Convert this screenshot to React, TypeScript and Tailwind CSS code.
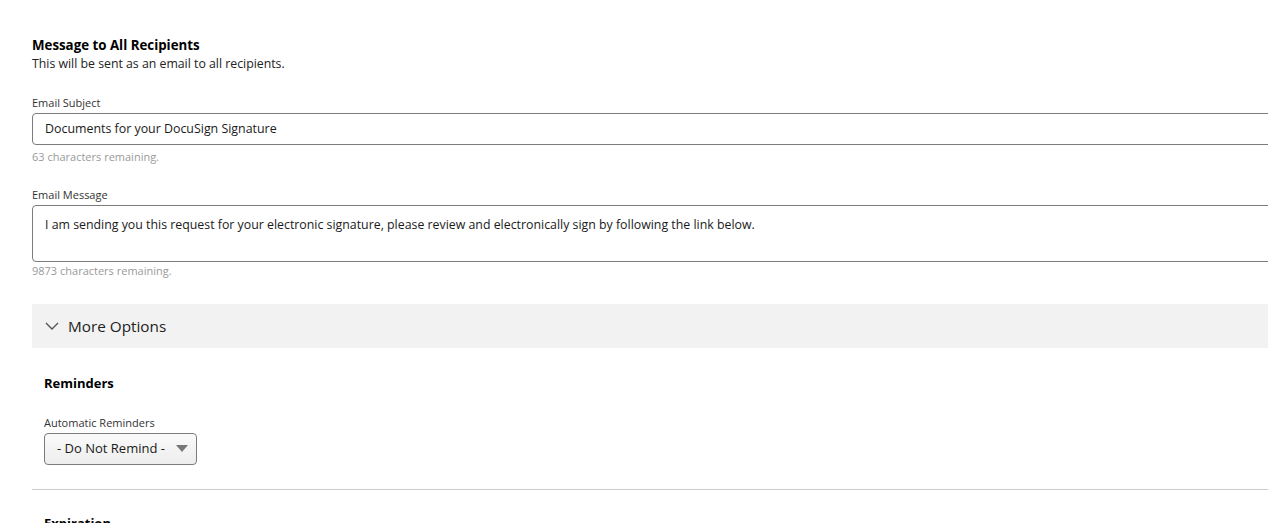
import React from "react";

export default function App() {
  const font = { fontFamily: '"Segoe UI", "Open Sans", "Noto Sans", sans-serif' };
  return (
    <div className="h-[523px] w-full overflow-hidden bg-white text-[#1a1a1a]" style={font}>
      <div className="w-[1300px] pl-8 pt-[36px]">
        <h2 className="text-[13.3px] font-bold leading-[18px] text-black">Message to All Recipients</h2>
        <p className="text-[12.3px] leading-[20px] text-[#222]">This will be sent as an email to all recipients.</p>

        <div className="mt-[22px]">
          <label className="block text-[11px] leading-[14px] text-[#333]">Email Subject</label>
          <div className="mt-[3px] flex h-[32px] w-[1260px] items-center rounded-[4px] border border-[#7c7c7c] px-3 text-[12.4px] text-[#1a1a1a]">
            Documents for your DocuSign Signature
          </div>
          <p className="mt-[5px] text-[11px] leading-[14px] text-[#9a9a9a]">63 characters remaining.</p>
        </div>

        <div className="mt-[24px]">
          <label className="block text-[11px] leading-[14px] text-[#333]">Email Message</label>
          <div className="mt-[3px] h-[57px] w-[1260px] rounded-[4px] border border-[#7c7c7c] px-3 pt-[10px] text-[12.35px] text-[#1a1a1a]">
            I am sending you this request for your electronic signature, please review and electronically sign by following the link below.
          </div>
          <p className="mt-[2px] text-[11px] leading-[14px] text-[#9a9a9a]">9873 characters remaining.</p>
        </div>

        <div className="mt-[26px] flex h-[44px] w-[1260px] items-center bg-[#f2f2f2] pl-[13px]">
          <svg width="14" height="14" viewBox="0 0 14 14" className="mr-[9px]">
            <path d="M1 4 L7 10 L13 4" fill="none" stroke="#555" strokeWidth="1.4" />
          </svg>
          <span className="text-[15.3px] text-[#222]">More Options</span>
        </div>

        <div className="pl-3">
          <h3 className="mt-[26px] text-[13px] font-bold leading-[18px] text-black">Reminders</h3>
          <label className="mt-[24px] block text-[11px] leading-[14px] text-[#333]">Automatic Reminders</label>
          <div className="mt-[3px] flex h-[32px] w-[153px] items-center justify-between rounded-[4px] border border-[#7c7c7c] bg-gradient-to-b from-[#fafafa] to-[#ededed] pl-[12px] pr-[8px] text-[13px] text-[#1a1a1a]">
            <span>- Do Not Remind -</span>
            <svg width="12" height="8" viewBox="0 0 12 8">
              <path d="M0 0 L12 0 L6 7 Z" fill="#777" />
            </svg>
          </div>
        </div>

        <div className="mt-[24px] h-px w-[1260px] bg-[#cccccc]" />
        <h3 className="mt-[24px] pl-3 text-[13px] font-bold leading-[18px] text-black">Expiration</h3>
      </div>
    </div>
  );
}
